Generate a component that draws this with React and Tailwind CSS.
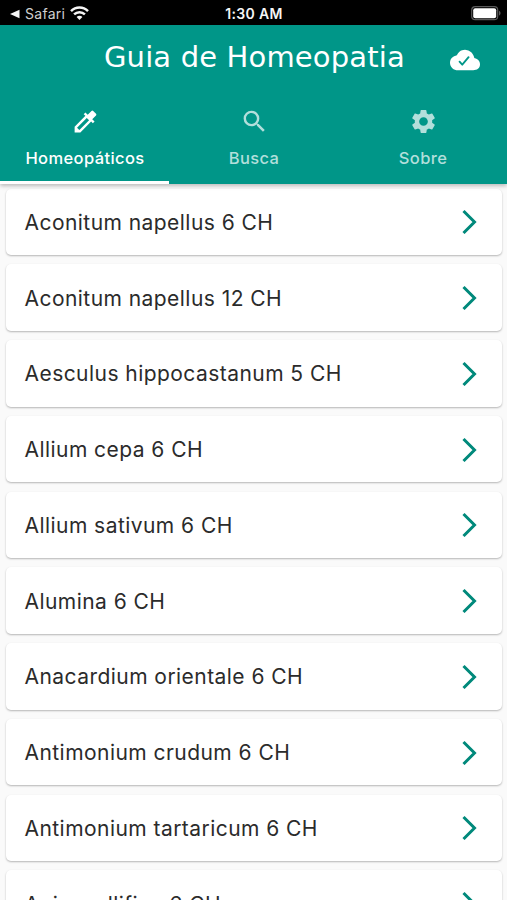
import { MdColorize, MdSearch, MdSettings } from "react-icons/md";
import { IoCloudDone } from "react-icons/io5";

const remedies = [
  "Aconitum napellus 6 CH",
  "Aconitum napellus 12 CH",
  "Aesculus hippocastanum 5 CH",
  "Allium cepa 6 CH",
  "Allium sativum 6 CH",
  "Alumina 6 CH",
  "Anacardium orientale 6 CH",
  "Antimonium crudum 6 CH",
  "Antimonium tartaricum 6 CH",
  "Apis mellifica 6 CH",
];

function StatusBar() {
  return (
    <div className="grid h-[25px] shrink-0 grid-cols-3 items-center bg-black pt-[3px] text-[#f5f5f5]">
      <div className="flex items-center pl-[10px]">
        <svg width="10" height="10" viewBox="0 0 10 10" fill="currentColor">
          <path d="M0 5 9.5 .8v8.400z" />
        </svg>
        <span className="ml-[5px] text-[14px] leading-5 tracking-[0.28px] text-[#cfcfcf]">Safari</span>
        <svg className="ml-[5px] -mt-[2px]" width="19" height="14" viewBox="0 0 19 14" fill="none" stroke="currentColor" strokeWidth="2.5">
          <path d="M1 5.2C5.8.4 13.2.4 18 5.2" />
          <path d="M4.1 8.4c3-3 7.8-3 10.8 0" />
          <path d="M9.5 14 6.6 11c1.6-1.6 4.200-1.600 5.800 0z" fill="currentColor" stroke="none" />
        </svg>
      </div>
      <div className="pl-[1px] text-center text-[14px] font-semibold leading-5 tracking-[0.35px]">1:30 AM</div>
      <div className="flex justify-end pr-[6px]">
        <svg className="-mt-[2px]" width="30" height="15" viewBox="0 0 30 15">
          <rect x=".7" y=".7" width="26" height="13" rx="3.500" fill="none" stroke="#5a5a5a" strokeWidth="1.200" />
          <rect x="2.200" y="2.200" width="23" height="10" rx="2" fill="#fff" />
          <path d="M28 4.800c2 .8 2 4 0 4.800z" fill="#5a5a5a" />
        </svg>
      </div>
    </div>
  );
}

function Tab({ icon: Icon, label, active }) {
  return (
    <div className={`flex flex-1 flex-col items-center ${active ? "text-white" : "text-[#b2dfdb]"}`}>
      <Icon className="ml-[1px] mt-[17px] size-[29px]" />
      <span className="ml-[1px] mt-[10px] text-[16.500px] font-medium leading-6 tracking-[0.4px]">{label}</span>
      <div className={`mt-auto h-[3px] w-full ${active ? "bg-white" : ""}`} />
    </div>
  );
}

export default function App() {
  return (
    <div className="flex h-[900px] w-full flex-col overflow-hidden bg-[#fafafa] font-['Inter','Liberation_Sans',sans-serif]">
      <StatusBar />
      <header className="z-10 flex h-[159px] shrink-0 flex-col bg-[#009688] text-white shadow-[0_2px_4px_rgba(0,0,0,0.25)]">
        <div className="flex h-[65px] items-center pl-[104px] pr-[27px]">
          <h1 className="-mt-[1px] flex-1 whitespace-nowrap font-['DejaVu_Sans',sans-serif] text-[29px] leading-8 tracking-[0.15px]">Guia de Homeopatia</h1>
          <IoCloudDone className="mt-[4px] size-[30px]" />
        </div>
        <nav className="flex flex-1">
          <Tab icon={MdColorize} label="Homeopáticos" active />
          <Tab icon={MdSearch} label="Busca" />
          <Tab icon={MdSettings} label="Sobre" />
        </nav>
      </header>
      <main className="flex flex-col gap-[9.250px] pl-[6px] pr-[5px] pt-[4.500px]">
        {remedies.map((name) => (
          <div
            key={name}
            className="flex h-[66.500px] shrink-0 items-center justify-between rounded-[5px] bg-white pl-[18.500px] pr-[24px] shadow-[0_1px_2px_rgba(0,0,0,0.28)]"
          >
            <span className="pt-[2px] text-[21px] leading-7 tracking-[0.450px] text-[#2b2b2b]">{name}</span>
            <svg width="17" height="25" viewBox="0 0 17 25" fill="none" stroke="#00897b" strokeWidth="3">
              <path d="M2.500 2 13.500 13 2.500 24" />
            </svg>
          </div>
        ))}
      </main>
    </div>
  );
}
